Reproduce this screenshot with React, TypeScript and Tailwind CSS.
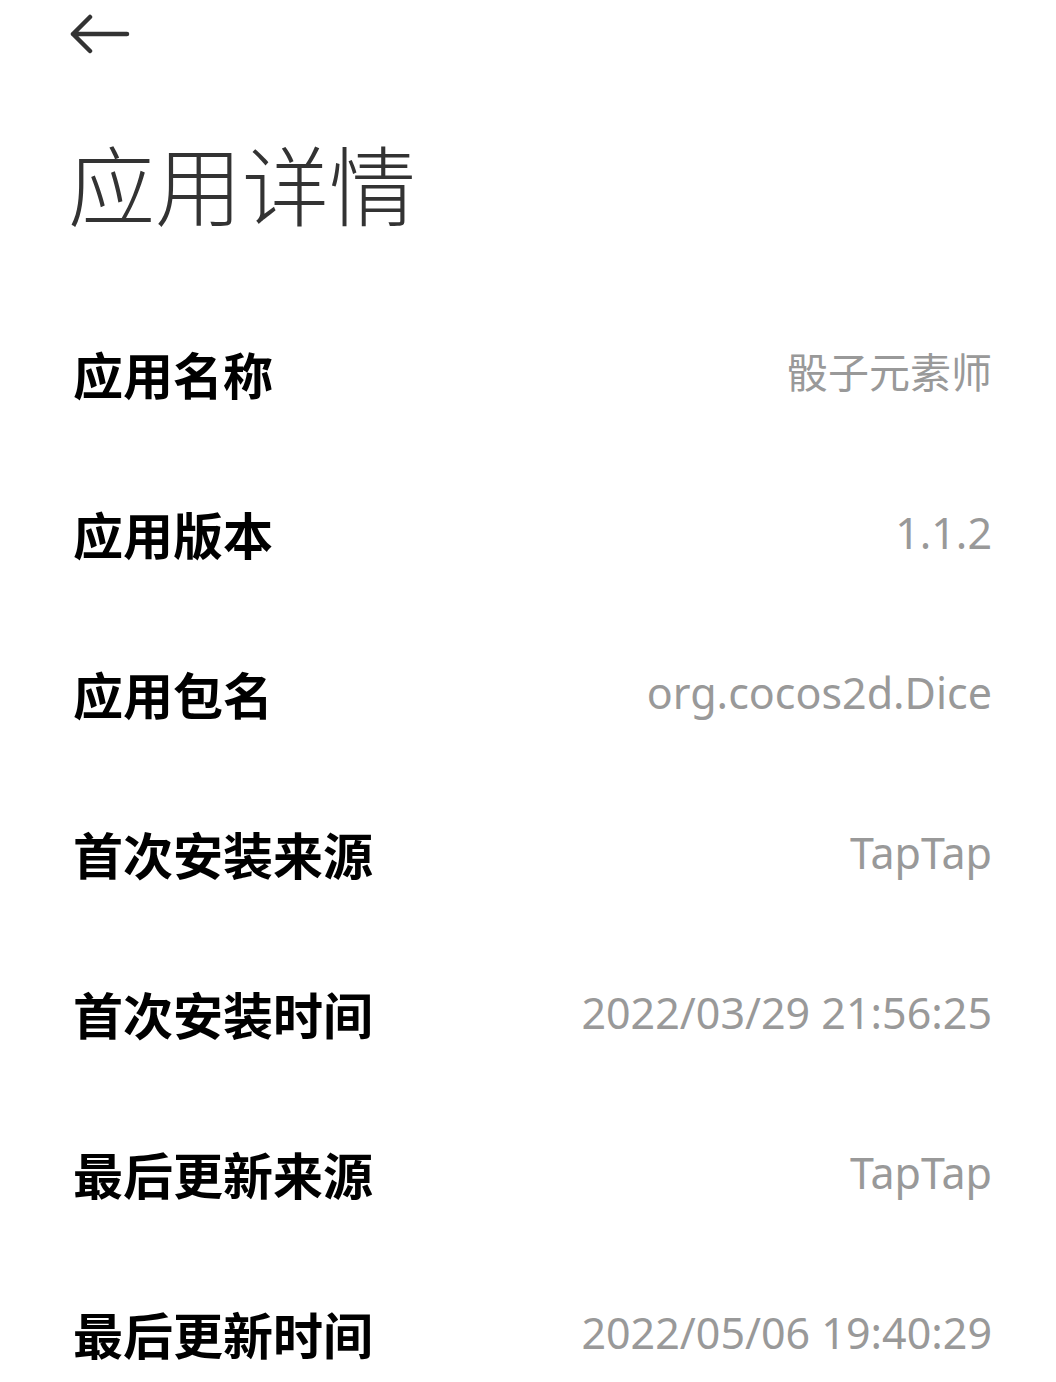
import React from "react";

const rows: [string, string][] = [
  ["应用名称", "骰子元素师"],
  ["应用版本", "1.1.2"],
  ["应用包名", "org.cocos2d.Dice"],
  ["首次安装来源", "TapTap"],
  ["首次安装时间", "2022/03/29 21:56:25"],
  ["最后更新来源", "TapTap"],
  ["最后更新时间", "2022/05/06 19:40:29"],
];

function BackArrow() {
  return (
    <svg width="72" height="40" viewBox="0 0 72 40" fill="none">
      <path
        d="M30 3 L13 20 L30 37 M13 20 L67 20"
        stroke="#333333"
        strokeWidth="4.5"
        strokeLinecap="round"
        strokeLinejoin="round"
      />
    </svg>
  );
}

export default function App() {
  return (
    <div className="w-[1056px] h-[1382px] bg-white overflow-hidden font-['Noto_Sans','Noto_Sans_CJK_SC',sans-serif]">
      {/* top bar */}
      <div className="h-[68px] pl-[60px] flex items-center">
        <BackArrow />
      </div>

      {/* title */}
      <div className="h-[228px] pl-[68px] flex items-center">
        <h1 className="text-[87px] font-light text-[#333333] leading-none font-['Noto_Sans_CJK_SC',sans-serif]">
          应用详情
        </h1>
      </div>

      {/* rows */}
      <div className="flex flex-col">
        {rows.map(([label, value]) => (
          <div
            key={label}
            className="h-[160px] pl-[73px] pr-[64px] pb-[7px] flex items-center justify-between"
          >
            <span className="text-[50px] font-bold text-black leading-none font-['Noto_Sans_CJK_SC',sans-serif]">
              {label}
            </span>
            <span
              className={
                /^[\x00-\x7f]+$/.test(value)
                  ? "text-[43px] text-[#999999] leading-none"
                  : "text-[41px] text-[#999999] leading-none"
              }
            >
              {value}
            </span>
          </div>
        ))}
      </div>
    </div>
  );
}
